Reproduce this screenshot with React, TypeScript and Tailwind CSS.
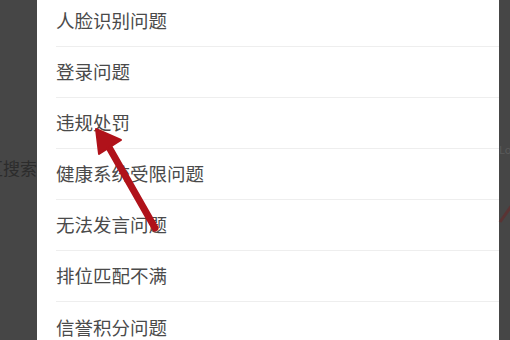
const items = [
  "人脸识别问题",
  "登录问题",
  "违规处罚",
  "健康系统受限问题",
  "无法发言问题",
  "排位匹配不满",
  "信誉积分问题",
];

export default function App() {
  return (
    <div
      className="relative flex h-[340px] w-[510px] overflow-hidden bg-[#464646]"
      style={{ fontFamily: '"Noto Sans CJK SC", "Noto Sans", sans-serif' }}
    >
      {/* dimmed page behind the sheet */}
      <div className="flex w-[37px] shrink-0 flex-col">
        <div className="mt-[155px] -ml-[14px] whitespace-nowrap text-[17px] leading-[26px] text-[#2c2c2c]">
          区搜索
        </div>
      </div>

      <div className="flex w-[462px] shrink-0 flex-col bg-white">
        <ul className="-mt-[4px] flex flex-col pl-[19px]">
          {items.map((item, i) => (
            <li
              key={item}
              className={
                i < items.length - 1
                  ? "flex h-[51px] items-center border-b border-[#eeeeee] text-[18.5px] text-[#4a4a4a]"
                  : "flex h-[51px] items-center text-[18.5px] text-[#4a4a4a]"
              }
            >
              {item}
            </li>
          ))}
        </ul>
      </div>

      <div className="flex flex-1 flex-col">
        <div className="mt-[142px] whitespace-nowrap text-[11px] leading-[14px] text-[#5a5a5a]">
          Lo
        </div>
      </div>

      {/* annotation arrows */}
      <svg
        className="pointer-events-none absolute left-0 top-0"
        width="510"
        height="340"
        viewBox="0 0 510 340"
      >
        <line x1="155" y1="228" x2="106" y2="142" stroke="#b0121a" strokeWidth="7" strokeLinecap="round" />
        <polygon points="96,129 99,154 121,140" fill="#b0121a" stroke="#b0121a" strokeWidth="2" strokeLinejoin="round" />
        <line x1="500" y1="222" x2="512" y2="205" stroke="#5a3434" strokeWidth="3" />
      </svg>
    </div>
  );
}
